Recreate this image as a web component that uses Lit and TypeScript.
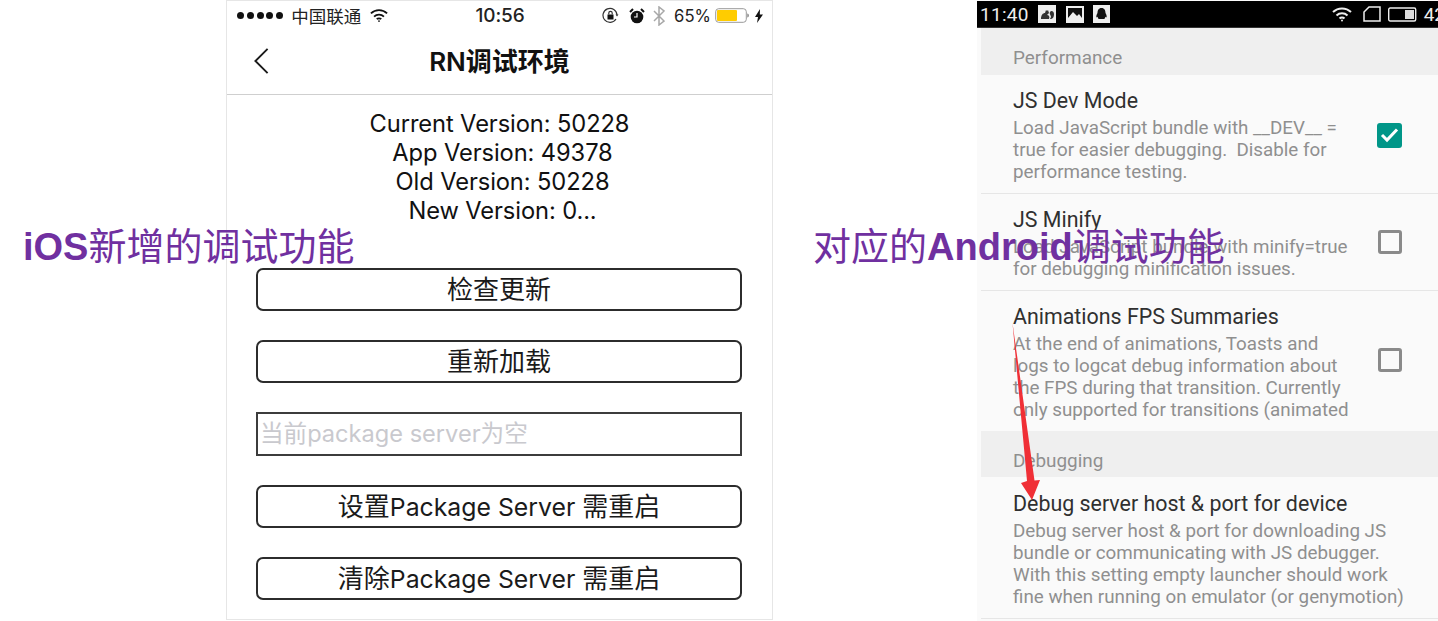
import { LitElement, html, css, svg } from "lit";
import { customElement } from "lit/decorators.js";

@customElement("app-root")
export class AppRoot extends LitElement {
  static styles = css`
    :host { display: block; width: 1438px; height: 621px; background: #fff; position: relative; overflow: hidden; }
    * { box-sizing: border-box; }
    .page { display: flex; gap: 204px; padding-left: 226px; height: 621px; }

    .ios { width: 547px; height: 620px; border: 1px solid #e6e6e6; background: #fff; display: flex; flex-direction: column; font-family: "Noto Sans CJK SC", sans-serif; color: #111; }
    .status { height: 29px; display: grid; grid-template-columns: 1fr auto 1fr; align-items: center; padding: 0 9px 0 10px; color: #222; }
    .st-left { display: flex; align-items: center; gap: 9px; font-size: 17.500px; line-height: 20px; }
    .dots { display: flex; gap: 2.800px; margin-right: -1px; }
    .dots i { width: 7px; height: 7px; border-radius: 50%; background: #111; display: block; }
    .time { font-size: 19px; font-weight: 500; font-family: Inter, sans-serif; letter-spacing: -.1px; }
    .st-right { display: flex; align-items: center; justify-content: flex-end; gap: 9px; font-size: 16.700px; font-family: Inter, sans-serif; }
    .nav { height: 65px; border-bottom: 1px solid #cfcfcf; display: flex; align-items: center; justify-content: center; position: relative; }
    .back { position: absolute; left: 27px; top: 17px; }
    .title { font-size: 26px; line-height: 30px; font-weight: 600; font-family: Inter, "Noto Sans CJK SC", sans-serif; }
    .info { padding-top: 14px; text-align: center; font-size: 23.700px; line-height: 29.100px; font-family: Inter, sans-serif; font-weight: 400; letter-spacing: -.1px; }
    .info div + div { padding-left: 6px; }
    .form { display: flex; flex-direction: column; gap: 29px; padding: 0 30px 0 29px; margin-top: 42.600px; }
    .btn { height: 43px; padding-top: 2px; border: 2px solid #2c2c2c; border-radius: 7px; display: flex; align-items: center; justify-content: center; font-size: 24.800px; line-height: 30px; font-family: Inter, "Noto Sans CJK SC", sans-serif; color: #1a1a1a; white-space: pre; }
    .btn .cjk { font-size: 26px; }
    .input { height: 44px; border: 2px solid #3c3c3c; display: flex; align-items: center; padding-left: 2px; font-size: 23.600px; line-height: 30px; color: #c9c9ce; font-family: Inter, "Noto Sans CJK SC", sans-serif; }

    .android { width: 461px; height: 621px; background: #fafafa; font-family: Roboto, sans-serif; overflow: hidden; }
    .a-status { height: 27px; margin-top: 1px; background: #000; color: #eee; display: flex; align-items: center; padding-left: 3px; font-size: 19px; border-bottom: 1px solid #333; white-space: nowrap; }
    .a-status .gap { flex: 1; }
    .a-status svg { flex: none; }
    .a-time { margin-right: 9px; letter-spacing: .3px; }
    .a-batt { margin-right: -7px; flex: none; }
    .a-wifi { margin-right: 11px; display: flex; }
    .head { margin-left: 4px; height: 46px; padding: 19px 0 0 32px; background: #efefef; font-size: 18.900px; line-height: 22px; color: #8f8f8f; }
    .head.first { height: 47px; }
    .row { margin-left: 4px; padding: 12px 36px 10px 32px; border-bottom: 1px solid #e6e6e6; display: flex; align-items: flex-start; }
    .row.last { padding-top: 13px; }
    .row .txt { width: 356px; flex: none; }
    .row.clip { height: 140px; overflow: hidden; border-bottom: none; }
    .row .t { font-size: 21.400px; line-height: 28px; color: #303030; margin-bottom: 2px; white-space: nowrap; }
    .row .d { font-size: 18.800px; line-height: 22px; color: #8f8f8f; white-space: pre; }
    .box { margin-left: auto; width: 25px; height: 25px; border-radius: 3px; flex: none; align-self: center; }
    .box.on { background: #009688; display: flex; align-items: center; justify-content: center; }
    .box.off { border: 3px solid #8a8a8a; width: 24px; height: 24px; margin-bottom: 2px; }
    .clip .box.off { margin-bottom: 4px; }

    .cap { position: absolute; top: 223px; font-size: 38px; line-height: 48px; color: #7030a0; white-space: nowrap; font-family: "Liberation Sans", "Noto Sans CJK SC", sans-serif; }
    .cap b { font-weight: 700; }
    .cap.a { left: 23px; }
    .cap.b { left: 813px; }
    .arrow { position: absolute; left: 1005px; top: 318px; }
  `;

  private wifi(w: number, c: string) {
    return html`<svg width=${w} height=${w * 0.8} viewBox="0 0 20 16" fill="none" stroke=${c} stroke-width="2"><path d="M1 6a13 13 0 0 1 18 0"/><path d="M4.500 9.500a8 8 0 0 1 11 0"/><path d="M7.500 12.500a3.500 3.500 0 0 1 5 0"/><circle cx="10" cy="14.500" r="1" fill=${c} stroke="none"/></svg>`;
  }

  render() {
    return html`
      <div class="page">
        <section class="ios">
          <div class="status">
            <div class="st-left">
              <div class="dots"><i></i><i></i><i></i><i></i><i></i></div>
              <span>中国联通</span>
              ${this.wifi(18, "#111")}
            </div>
            <div class="time">10:56</div>
            <div class="st-right">
              <svg width="17" height="17" viewBox="0 0 17 17" fill="none" stroke="#333" stroke-width="1.200"><path d="M14 12a7 7 0 1 1 1-4"/><path d="M13.500 7.500h3l-1.500 2z" fill="#333" stroke="none"/><rect x="5.500" y="7.500" width="6" height="5" fill="#111" stroke="none"/><path d="M6.800 7.500V6a1.700 1.700 0 0 1 3.400 0v1.500"/></svg>
              <svg width="16" height="16" viewBox="0 0 16 16" style="margin-left:1px"><circle cx="8" cy="9" r="6.300" fill="#111"/><path d="M1 4l3-3M15 4l-3-3" stroke="#111" stroke-width="2"/><path d="M8 5v4H5" stroke="#fff" stroke-width="1.200" fill="none"/></svg>
              <svg width="12" height="20" viewBox="0 0 12 20" fill="none" stroke="#a8a8a8" stroke-width="1.500" style="margin-left:-1px"><path d="M1 5l10 10-5 4V1l5 4L1 15"/></svg>
              <span style="margin-right:-5px">65%</span>
              <svg width="35" height="15" viewBox="0 0 35 15" style="margin-right:-4px"><rect x=".7" y=".7" width="30.600" height="13.600" rx="3" fill="#fff" stroke="#999" stroke-width="1"/><rect x="2" y="2" width="20" height="11" rx="1" fill="#ffcc00"/><path d="M32.500 5.500c1.500.3 1.500 3.700 0 4z" fill="#555"/></svg>
              <svg width="8" height="14" viewBox="0 0 8 14"><path d="M5 0L0 8h3l-1 6 6-8.500H4.800z" fill="#111"/></svg>
            </div>
          </div>
          <div class="nav">
            <svg class="back" width="15" height="28" viewBox="0 0 16 28" fill="none" stroke="#1a1a1a" stroke-width="2"><path d="M14.500 1L1.500 14l13 13"/></svg>
            <div class="title">RN调试环境</div>
          </div>
          <div class="info">
            <div>Current Version: 50228</div>
            <div>App Version: 49378</div>
            <div>Old Version: 50228</div>
            <div>New Version: 0...</div>
          </div>
          <div class="form">
            <div class="btn"><span class="cjk">检查更新</span></div>
            <div class="btn"><span class="cjk">重新加载</span></div>
            <div class="input">当前package server为空</div>
            <div class="btn"><span><span class="cjk">设置</span>Package Server <span class="cjk">需重启</span></span></div>
            <div class="btn"><span><span class="cjk">清除</span>Package Server <span class="cjk">需重启</span></span></div>
          </div>
        </section>

        <section class="android">
          <div class="a-status">
            <span class="a-time">11:40</span>
            <svg width="18" height="18" viewBox="0 0 18 18" style="margin-right:10px"><rect width="18" height="18" fill="#eee"/><path d="M3 14c0-4 2-6 4-6l1-3 1 1 1-1 1 3-2 2c2 0 3 2 2 4zM12 14c3 0 4-2 4-5s-3-4-4-2 1 3 1 5z" fill="#333"/></svg>
            <svg width="18" height="17" viewBox="0 0 18 17" style="margin-right:9px"><rect width="18" height="17" fill="#eee"/><rect x="2" y="2" width="14" height="13" fill="#111"/><path d="M2 12l5-6 4 4 2-2 3 4v3H2z" fill="#eee"/><path d="M2 5h5l-5 6z" fill="#111"/></svg>
            <svg width="17" height="18" viewBox="0 0 17 18"><rect width="17" height="18" fill="#eee"/><path d="M8.500 3c-3 0-4 2.500-4 5-1 1.500-1.500 3.500-1 4.500l1-.7c.2 1 .7 1.700 1.200 2.200h5.600c.5-.5 1-1.200 1.200-2.200l1 .7c.5-1 0-3-1-4.500 0-2.500-1-5-4-5z" fill="#111"/></svg>
            <span class="gap"></span>
            <span class="a-wifi">${this.wifi(20, "#eee")}</span>
            <svg width="18" height="16" viewBox="0 0 18 16" fill="none" stroke="#eee" stroke-width="1.500" style="margin-right:7px"><path d="M1 15V6l5-5h11v14z"/></svg>
            <svg width="29" height="15" viewBox="0 0 29 15" style="margin-right:7px"><rect x=".7" y="1" width="27" height="13" rx="1.500" fill="none" stroke="#eee" stroke-width="1.400"/><rect x="17" y="3" width="9" height="9" fill="#ddd"/></svg>
            <span class="a-batt">42</span>
          </div>
          <div class="head first">Performance</div>
          <div class="row">
            <div class="txt">
              <div class="t">JS Dev Mode</div>
              <div class="d">${"Load JavaScript bundle with __DEV__ =\ntrue for easier debugging.  Disable for\nperformance testing."}</div>
            </div>
            <div class="box on"><svg width="19" height="16" viewBox="0 0 19 16" fill="none" stroke="#fff" stroke-width="3"><path d="M2 8l5 5L17 2.500"/></svg></div>
          </div>
          <div class="row">
            <div class="txt">
              <div class="t">JS Minify</div>
              <div class="d">${"Load JavaScript bundle with minify=true\nfor debugging minification issues."}</div>
            </div>
            <div class="box off"></div>
          </div>
          <div class="row clip">
            <div class="txt">
              <div class="t">Animations FPS Summaries</div>
              <div class="d">${"At the end of animations, Toasts and\nlogs to logcat debug information about\nthe FPS during that transition. Currently\nonly supported for transitions (animated"}</div>
            </div>
            <div class="box off"></div>
          </div>
          <div class="head">Debugging</div>
          <div class="row last">
            <div class="txt">
              <div class="t">Debug server host &amp; port for device</div>
              <div class="d">${"Debug server host & port for downloading JS\nbundle or communicating with JS debugger.\nWith this setting empty launcher should work\nfine when running on emulator (or genymotion)"}</div>
            </div>
          </div>
        </section>
      </div>

      <div class="cap a"><b>iOS</b>新增的调试功能</div>
      <div class="cap b">对应的<b>Android</b>调试功能</div>
      <svg class="arrow" width="40" height="190" viewBox="1005 318 40 190">${svg`<path d="M1012.500 323L1027 481L1021 483L1032 500L1040 480L1034.500 480.500Z" fill="#f02f36"/>`}</svg>
    `;
  }
}
